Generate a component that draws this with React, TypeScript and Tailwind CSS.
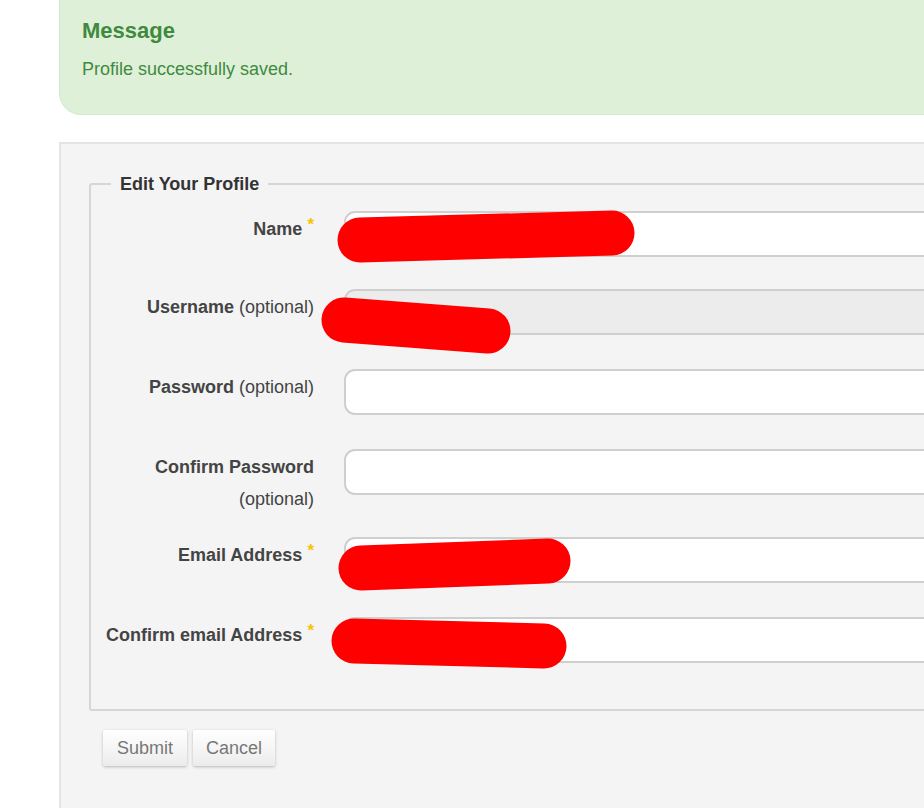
import React from 'react';

const FONT = { fontFamily: '"Liberation Sans", Arial, Helvetica, sans-serif' };

type Field = { label: string; opt?: string; req?: boolean; disabled?: boolean; mt: string; wrap?: boolean };

const FIELDS: Field[] = [
  { label: 'Name', req: true, mt: 'mt-0' },
  { label: 'Username', opt: '(optional)', disabled: true, mt: 'mt-[32px]' },
  { label: 'Password', opt: '(optional)', mt: 'mt-[34px]' },
  { label: 'Confirm Password', opt: '(optional)', mt: 'mt-[34px]', wrap: true },
  { label: 'Email Address', req: true, mt: 'mt-[22px]' },
  { label: 'Confirm email Address', req: true, mt: 'mt-[34px]' },
];

// red scribbles drawn over the inputs (page coords)
const SCRIBBLES = [
  { x1: 360, y1: 240, x2: 612, y2: 233 },
  { x1: 344, y1: 320, x2: 488, y2: 331 },
  { x1: 361, y1: 568, x2: 548, y2: 561 },
  { x1: 354, y1: 641, x2: 544, y2: 646 },
];

function Star() {
  return <span className="ml-[5px] align-top text-[17px] font-bold leading-6 text-[#f5c400]">*</span>;
}

export default function App() {
  return (
    <div className="relative h-[808px] w-[924px] overflow-hidden bg-white" style={FONT}>
      {/* message box */}
      <div className="ml-[59px] mt-[-30px] h-[145px] w-[900px] rounded-[22px] border border-[#d3e8c8] bg-[#dff0d8] px-[22px] pt-[46px]">
        <div className="text-[22px] font-bold leading-7 text-[#3f8a3f]">Message</div>
        <div className="mt-[12px] text-[18px] leading-6 text-[#3f8a3f]">Profile successfully saved.</div>
      </div>

      {/* form panel */}
      <div className="ml-[59px] mt-[27px] h-[700px] w-[900px] border-2 border-[#e4e4e4] bg-[#f4f4f4] pl-[28px] pt-[28px]">
        <fieldset className="h-[539px] rounded-[3px] border-2 border-[#d6d6d6] pl-0 pr-0 pt-[15px]">
          <legend className="ml-[20px] px-[9px] text-[18px] font-bold leading-6 text-[#333]">Edit Your Profile</legend>
          <div className="flex flex-col">
            {FIELDS.map((f) => (
              <div key={f.label} className={`flex items-start ${f.mt}`}>
                <div className="w-[223px] pt-[2px] text-right text-[18px] leading-8 text-[#444]">
                  <span className="font-bold">{f.label}</span>
                  {f.opt && (f.wrap ? <><br /><span>{f.opt}</span></> : <span> {f.opt}</span>)}
                  {f.req && <Star />}
                </div>
                <input
                  disabled={f.disabled}
                  className={`ml-[30px] h-[46px] w-[700px] rounded-[11px] border-2 border-[#cfcfcf] ${f.disabled ? 'bg-[#ececec]' : 'bg-white'}`}
                />
              </div>
            ))}
          </div>
        </fieldset>
        <div className="ml-[14px] mt-[19px] flex gap-[6px]">
          <button className="h-[36px] w-[84px] rounded-[2px] bg-gradient-to-b from-white to-[#ececec] text-[18px] text-[#777] shadow-[0_1px_3px_rgba(0,0,0,0.25)]">
            Submit
          </button>
          <button className="h-[36px] w-[82px] rounded-[2px] bg-gradient-to-b from-white to-[#ececec] text-[18px] text-[#777] shadow-[0_1px_3px_rgba(0,0,0,0.25)]">
            Cancel
          </button>
        </div>
      </div>

      <svg className="pointer-events-none absolute left-0 top-0" width="924" height="808">
        {SCRIBBLES.map((s, i) => (
          <line key={i} x1={s.x1} y1={s.y1} x2={s.x2} y2={s.y2} stroke="#ff0000" strokeWidth="45" strokeLinecap="round" />
        ))}
      </svg>
    </div>
  );
}
